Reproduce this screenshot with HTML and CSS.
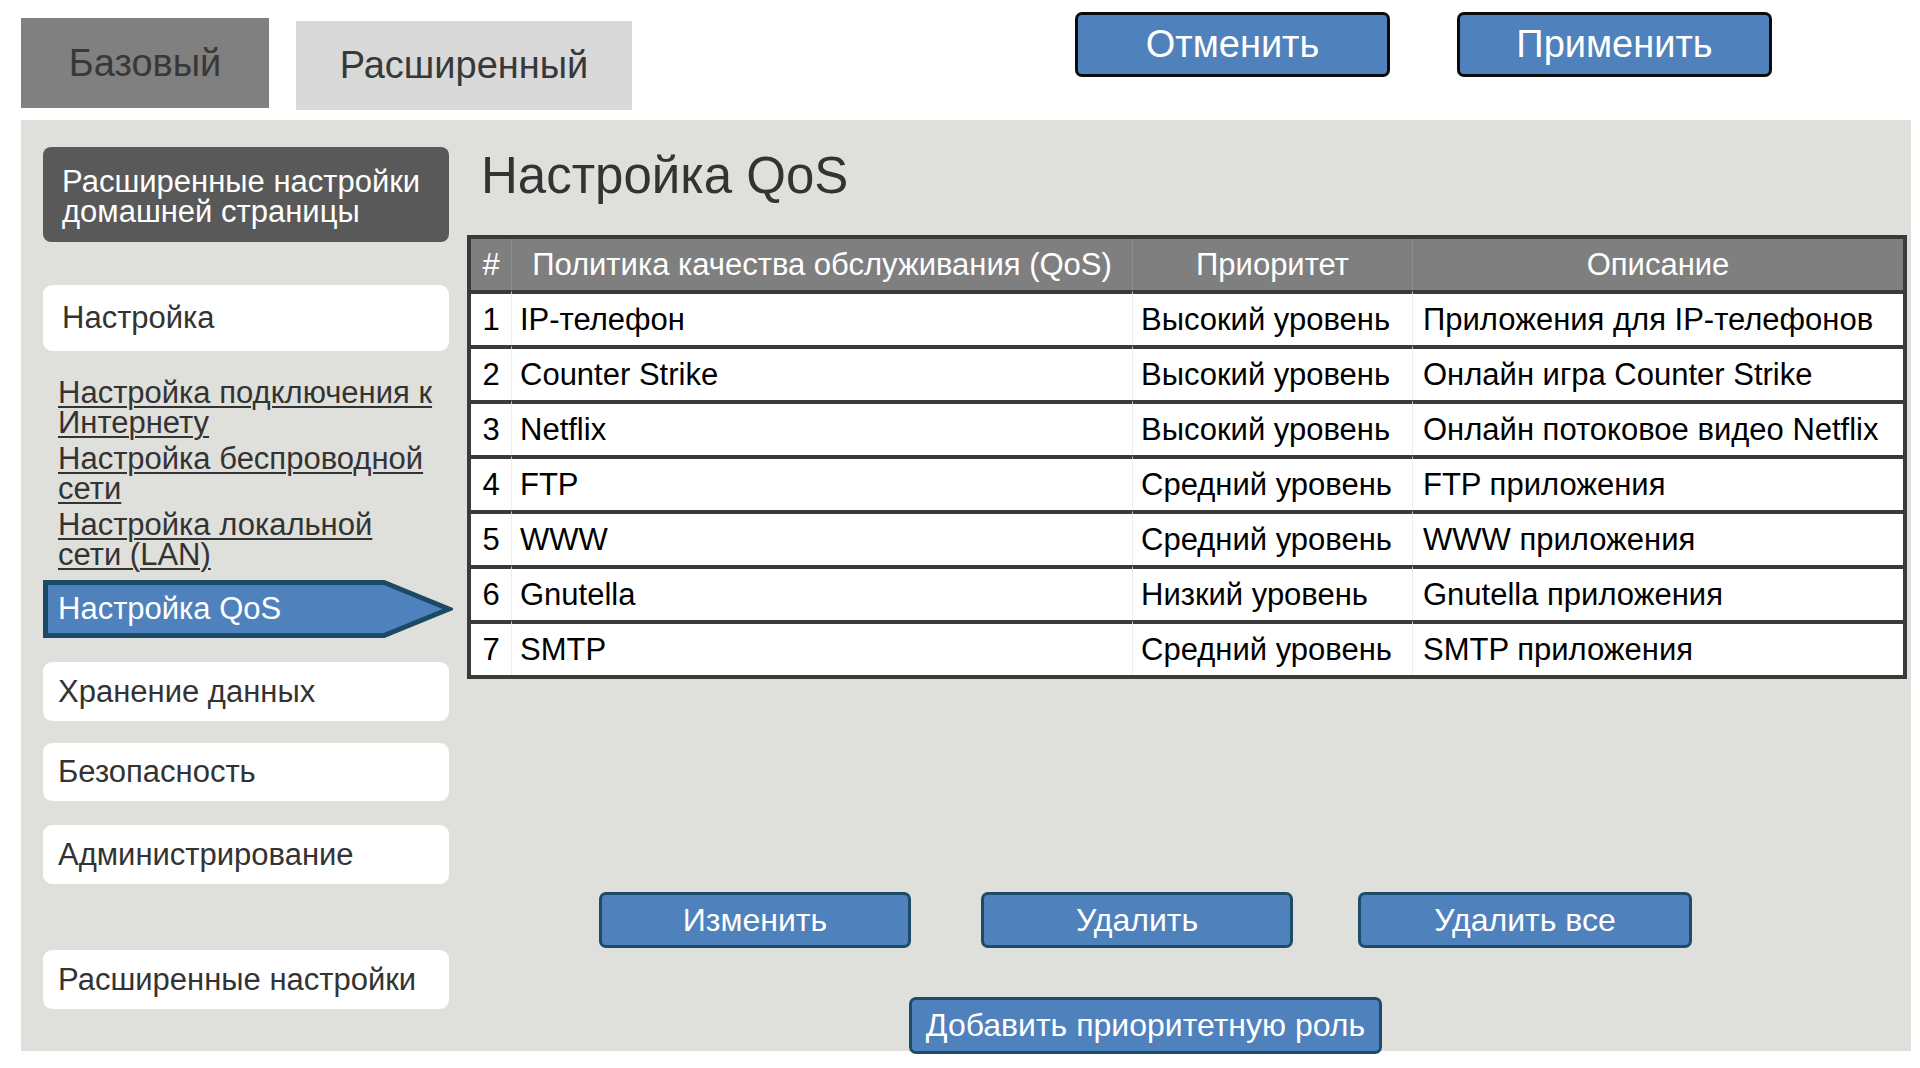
FILE: index.html
```html
<!DOCTYPE html>
<html lang="ru">
<head>
<meta charset="utf-8">
<title>Настройка QoS</title>
<link rel="stylesheet" href="styles.css">
</head>
<body>
<header class="top">
  <nav class="tabs">
    <div class="tab tab-basic">Базовый</div>
    <div class="tab tab-adv">Расширенный</div>
  </nav>
  <div class="actions">
    <button class="btn-top">Отменить</button>
    <button class="btn-top">Применить</button>
  </div>
</header>
<div class="panel">
  <aside class="sidebar">
    <div class="side-head">Расширенные настройки<br>домашней страницы</div>
    <div class="side-item side-setup">Настройка</div>
    <div class="links">
      <a class="link" href="#">Настройка подключения к<br>Интернету</a>
      <a class="link" href="#">Настройка беспроводной<br>сети</a>
      <a class="link" href="#">Настройка локальной<br>сети (LAN)</a>
    </div>
    <div class="side-active">
      <svg class="arrow-bg" width="410" height="58" viewBox="0 0 410 58" aria-hidden="true">
        <polygon points="2.5,2.5 341,2.5 406,29 341,55.5 2.5,55.5" fill="#4f81bd" stroke="#1a4a66" stroke-width="5"/>
      </svg>
      <span class="active-label">Настройка QoS</span>
    </div>
    <div class="side-item side-storage">Хранение данных</div>
    <div class="side-item side-security">Безопасность</div>
    <div class="side-item side-admin">Администрирование</div>
    <div class="side-item side-advanced">Расширенные настройки</div>
  </aside>
  <main class="content">
    <h1 class="title">Настройка QoS</h1>
    <table class="qos">
      <colgroup>
        <col class="c-num"><col class="c-pol"><col class="c-pri"><col class="c-desc">
      </colgroup>
      <thead>
        <tr><th>#</th><th>Политика качества обслуживания (QoS)</th><th>Приоритет</th><th>Описание</th></tr>
      </thead>
      <tbody>
        <tr><td>1</td><td>IP-телефон</td><td>Высокий уровень</td><td>Приложения для IP-телефонов</td></tr>
        <tr><td>2</td><td>Counter Strike</td><td>Высокий уровень</td><td>Онлайн игра Counter Strike</td></tr>
        <tr><td>3</td><td>Netflix</td><td>Высокий уровень</td><td>Онлайн потоковое видео Netflix</td></tr>
        <tr><td>4</td><td>FTP</td><td>Средний уровень</td><td>FTP приложения</td></tr>
        <tr><td>5</td><td>WWW</td><td>Средний уровень</td><td>WWW приложения</td></tr>
        <tr><td>6</td><td>Gnutella</td><td>Низкий уровень</td><td>Gnutella приложения</td></tr>
        <tr><td>7</td><td>SMTP</td><td>Средний уровень</td><td>SMTP приложения</td></tr>
      </tbody>
    </table>
    <div class="row-btns">
      <button class="btn btn-edit">Изменить</button>
      <button class="btn btn-del">Удалить</button>
      <button class="btn btn-delall">Удалить все</button>
    </div>
    <div class="row-add">
      <button class="btn btn-add">Добавить приоритетную роль</button>
    </div>
  </main>
</div>
</body>
</html>
```
FILE: styles.css
```css
* { box-sizing: border-box; }
html, body { margin: 0; padding: 0; background: #ffffff; }
body {
  font-family: "Liberation Sans", Arial, sans-serif;
  color: #333333;
  width: 1920px;
  height: 1068px;
  overflow: hidden;
}

/* top bar */
.top {
  display: flex;
  align-items: flex-start;
  height: 120px;
  padding-left: 21px;
}
.tabs { display: flex; align-items: flex-start; }
.tab {
  display: flex;
  align-items: center;
  justify-content: center;
  font-size: 38px;
  color: #383838;
}
.tab-basic {
  margin-top: 18px;
  width: 248px;
  height: 90px;
  background: #808080;
}
.tab-adv {
  margin-top: 21px;
  margin-left: 27px;
  width: 336px;
  height: 89px;
  background: #d9d9d9;
}
.actions {
  display: flex;
  gap: 67px;
  margin-left: 443px;
  margin-top: 12px;
}
.btn-top {
  width: 315px;
  height: 65px;
  background: #4f81bd;
  border: 3px solid #0b0b0b;
  border-radius: 7px;
  color: #ffffff;
  font-family: inherit;
  font-size: 38px;
  padding: 0;
}

/* main panel */
.panel {
  display: flex;
  margin-left: 21px;
  width: 1890px;
  height: 931px;
  background: #dfdfdb;
  padding: 27px 0 0 22px;
}

/* sidebar */
.sidebar {
  width: 410px;
  flex: none;
  display: flex;
  flex-direction: column;
  font-size: 31px;
  line-height: 30px;
}
.side-head {
  width: 406px;
  height: 95px;
  background: #595959;
  border-radius: 8px;
  color: #ffffff;
  padding: 20px 0 0 19px;
}
.side-item {
  width: 406px;
  height: 59px;
  background: #ffffff;
  border-radius: 9px;
  display: flex;
  align-items: center;
  padding-left: 15px;
  color: #333333;
}
.side-setup { margin-top: 43px; height: 66px; padding-left: 19px; }
.links {
  margin-top: 27px;
  padding-left: 15px;
  display: flex;
  flex-direction: column;
  gap: 6px;
}
.link {
  color: #333333;
  text-decoration: underline;
  text-decoration-thickness: 2px;
  text-underline-offset: 3px;
}
.side-active {
  position: relative;
  margin-top: 10px;
  width: 410px;
  height: 58px;
  display: flex;
  align-items: center;
  padding-left: 15px;
  color: #ffffff;
}
.arrow-bg { position: absolute; left: 0; top: 0; }
.active-label { position: relative; }
.side-storage { margin-top: 24px; }
.side-security { margin-top: 22px; height: 58px; }
.side-admin { margin-top: 24px; }
.side-advanced { margin-top: 66px; }

/* content */
.content {
  flex: 1;
  margin-left: 14px;
  padding-right: 4px;
  display: flex;
  flex-direction: column;
}
.title {
  margin: 4px 0 0 14px;
  font-size: 51px;
  line-height: 50px;
  font-weight: normal;
  color: #333333;
  height: 50px;
}
.qos {
  margin-top: 34px;
  width: 1440px;
  table-layout: fixed;
  border-collapse: separate;
  border-spacing: 0;
  border: 4px solid #3a3a3a;
  font-size: 31px;
  line-height: 51px;
  color: #000000;
  background: #ffffff;
}
.c-num { width: 40px; }
.c-pol { width: 621px; }
.c-pri { width: 280px; }
.c-desc { width: 491px; }
.qos th {
  background: #7f7f7f;
  color: #ffffff;
  font-weight: normal;
  text-align: center;
  padding: 0;
  height: 51px;
  white-space: nowrap;
}
.qos th + th { border-left: 1px solid #8e8e8e; }
.qos td {
  border-top: 4px solid #3a3a3a;
  padding: 0 0 0 8px;
  white-space: nowrap;
  overflow: hidden;
}
.qos td + td { border-left: 1px solid #ececec; }
.qos td:first-child { text-align: center; padding: 0; }
.qos td:nth-child(4) { padding-left: 10px; }

/* bottom buttons */
.btn {
  background: #4f81bd;
  border: 3px solid #1d4c68;
  border-radius: 7px;
  color: #ffffff;
  font-family: inherit;
  font-size: 32px;
  padding: 0;
  height: 56px;
}
.row-btns {
  display: flex;
  margin-top: 213px;
  padding-left: 132px;
}
.btn-edit { width: 312px; }
.btn-del { width: 312px; margin-left: 70px; }
.btn-delall { width: 334px; margin-left: 65px; }
.row-add {
  display: flex;
  margin-top: 49px;
  padding-left: 442px;
}
.btn-add { width: 473px; height: 57px; }
```
